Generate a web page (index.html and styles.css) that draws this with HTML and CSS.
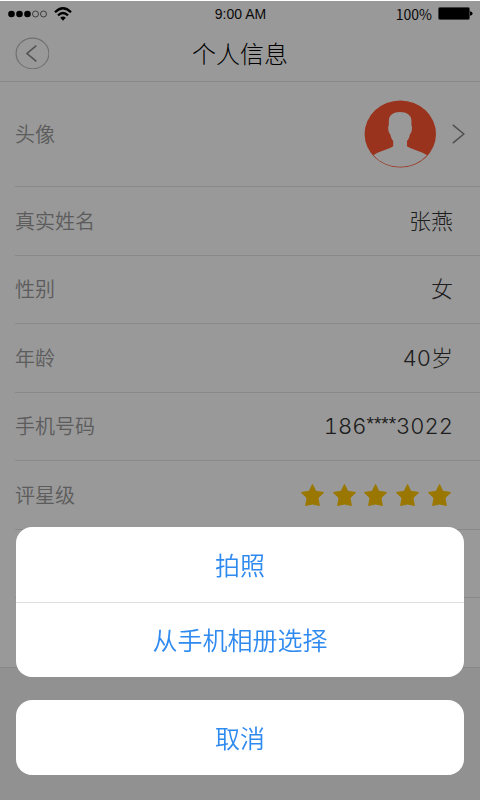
FILE: index.html
```html
<!DOCTYPE html>
<html lang="zh-CN">
<head>
<meta charset="utf-8">
<meta name="viewport" content="width=device-width, initial-scale=1">
<title>个人信息</title>
<link rel="stylesheet" href="styles.css">
</head>
<body>
<div class="page">
  <div class="status">
    <div class="status-left">
      <svg class="signal" width="40" height="8" viewBox="0 0 40 8" aria-hidden="true">
        <circle cx="3.5" cy="4" r="3.3"/><circle cx="11.5" cy="4" r="3.3"/><circle cx="19.5" cy="4" r="3.3"/>
        <circle class="ring" cx="27.5" cy="4" r="3"/><circle class="ring" cx="35.5" cy="4" r="3"/>
      </svg>
      <svg width="18" height="14" viewBox="0 0 18 14" aria-hidden="true">
        <path class="wave" d="M1 5.2Q9-2.6 17 5.2M4 8.4Q9 3.6 14 8.4"/>
        <path d="M6.2 10.7Q9 8.4 11.8 10.7L9 13.8Z"/>
      </svg>
    </div>
    <span class="time">9:00 AM</span>
    <div class="status-right">
      <span>100%</span>
      <svg width="35" height="13" viewBox="0 0 35 13" aria-hidden="true">
        <rect class="cell" x=".5" y=".5" width="31" height="12" rx="1"/>
        <rect x="1" y="1" width="30" height="11"/>
        <path d="M32 4.2Q34.6 4.5 34.6 6.5T32 8.8Z"/>
      </svg>
    </div>
  </div>
  <header class="header">
    <button class="back" type="button" aria-label="返回">
      <svg width="34" height="32" viewBox="0 0 34 32" aria-hidden="true">
        <ellipse class="back-ring" cx="17.5" cy="16.5" rx="16.4" ry="15.3"/>
        <path class="chevron" d="M21.300 8.600L12 16.500L21.300 24.400"/>
      </svg>
    </button>
    <h1 class="title">个人信息</h1>
  </header>
  <main>
    <div class="row row-avatar">
      <span class="label">头像</span>
      <a class="avatar-link" href="#avatar" aria-label="修改头像">
        <svg width="72" height="68" viewBox="0 0 72 68" aria-hidden="true">
          <ellipse class="avatar-bg" cx="36.300" cy="34" rx="35.700" ry="33.600"/>
          <path class="person" d="M9.600 55.200C15 50.800 24 50 29.200 46.300V41C27.600 39 26.600 36.500 26.200 34C24.800 33.500 24.200 30 24.200 27C24.700 26.500 24.900 24 24.900 20.500C24.900 15 29.500 12 36 12S47.400 15 47.400 20.500C47.400 24 47.500 26.500 48 27C48 30 47.400 33.500 46 34C45.600 36.500 44.800 39 43 41V46.300C48.200 50 57 50.800 62.900 55.200C56 62.500 47 66.700 36.300 66.700S16 62.500 9.600 55.200Z"/>
        </svg>
        <svg width="13" height="20" viewBox="0 0 13 20" aria-hidden="true">
          <path class="chevron" d="M.8.8L11.800 10L.8 19.200"/>
        </svg>
      </a>
    </div>
    <div class="rows">
      <div class="row"><span class="label">真实姓名</span><span class="value">张燕</span></div>
      <div class="row"><span class="label">性别</span><span class="value">女</span></div>
      <div class="row"><span class="label">年龄</span><span class="value">40岁</span></div>
      <div class="row"><span class="label">手机号码</span><span class="value">186<span class="mask">****</span>3022</span></div>
      <div class="row">
        <span class="label">评星级</span>
        <svg class="stars" width="153" height="24" viewBox="0 0 153 24" role="img" aria-label="五星">
          <defs><path id="star" d="M12.500 1.500L15.800 8.300L23.700 9.500L18 15L19.300 22.500Q12.500 19.500 5.700 22.500L7 15L1.300 9.500L9.200 8.300Z"/></defs>
          <use href="#star"/><use href="#star" x="32"/><use href="#star" x="63"/><use href="#star" x="95"/><use href="#star" x="127"/>
        </svg>
      </div>
      <div class="row"></div>
      <div class="row"></div>
    </div>
  </main>
</div>
<div class="overlay">
  <div class="sheet" role="dialog" aria-modal="true" aria-label="选择头像">
    <div class="group">
      <button class="action" type="button">拍照</button>
      <button class="action" type="button">从手机相册选择</button>
    </div>
    <div class="group">
      <button class="action" type="button">取消</button>
    </div>
  </div>
</div>
</body>
</html>
```
FILE: styles.css
```css
* {
  box-sizing: border-box;
}

body {
  margin: 0;
  background: #f2f2f2;
  font-family: "Noto Sans CJK SC", sans-serif;
  font-weight: 350;
  color: #333;
}

button {
  border: 0;
  padding: 0;
  background: none;
  font: inherit;
  cursor: pointer;
}

svg {
  display: block;
}

.page {
  min-height: 100vh;
}

.status {
  display: grid;
  grid-template-columns: 1fr auto 1fr;
  align-items: center;
  height: 27px;
  padding: 0 7px 0 8px;
  background: #fff;
  font-size: 14px;
  line-height: 20px;
  font-weight: 400;
  color: #111;
}

.status-left,
.status-right {
  display: flex;
  align-items: center;
  gap: 6px;
}

.status-right {
  justify-content: flex-end;
}

.time {
  font-family: "Liberation Sans", sans-serif;
}

.ring,
.wave,
.cell {
  fill: none;
  stroke: #222;
}

.ring {
  stroke-width: 0.7;
}

.wave {
  stroke: #000;
  stroke-width: 2.3;
}

.cell {
  stroke: #666;
}

.header {
  display: grid;
  grid-template-columns: 1fr auto 1fr;
  align-items: center;
  height: 55px;
  padding: 0 15px 2px;
  background: #fff;
  border-bottom: 1px solid #e4e4e4;
}

.back {
  justify-self: start;
}

.back-ring {
  fill: none;
  stroke: #bbb;
  stroke-width: 1.2;
}

.chevron {
  fill: none;
  stroke: #888;
  stroke-width: 1.6;
}

.title {
  margin: 0;
  font-size: 24px;
  line-height: 36px;
  font-weight: 300;
  color: #000;
}

main {
  background: #fff;
  border-bottom: 1px solid #e4e4e4;
}

.rows {
  display: grid;
  grid-auto-rows: 1fr;
  min-height: 480px;
}

.row {
  display: flex;
  align-items: center;
  justify-content: space-between;
  margin-left: 15px;
  padding-right: 27px;
  border-bottom: 1px solid #e4e4e4;
}

.row:last-child {
  border-bottom: 0;
}

.row-avatar {
  min-height: 105px;
  padding-right: 15px;
}

.label {
  font-size: 20px;
  line-height: 30px;
  color: #999;
}

.value {
  font-family: Inter, "Noto Sans CJK SC", sans-serif;
  font-size: 22px;
  font-weight: 300;
  line-height: 32px;
  font-variant-numeric: tabular-nums;
}

.mask {
  font-family: "Liberation Sans", sans-serif;
  font-size: 19px;
  line-height: 1;
  vertical-align: 20%;
}

.avatar-link {
  display: flex;
  align-items: center;
  gap: 16px;
}

.avatar-bg {
  fill: #ff5632;
}

.person {
  fill: #fff;
}

.stars {
  fill: #ffc600;
  stroke: #ffc600;
  stroke-width: 1;
  stroke-linejoin: round;
}

.overlay {
  position: fixed;
  inset: 1px 0 0;
  display: flex;
  flex-direction: column;
  justify-content: flex-end;
  padding: 25px 16px;
  background: rgba(0, 0, 0, 0.4);
}

.sheet {
  display: grid;
  gap: 23px;
}

.group {
  overflow: hidden;
  border-radius: 16px;
  background: #fff;
}

.action {
  display: block;
  width: 100%;
  height: 75px;
  padding-bottom: 2px;
  font-size: 25px;
  line-height: 36px;
  color: #2f8af0;
}

.action + .action {
  border-top: 1px solid #e0e0e0;
}
```
